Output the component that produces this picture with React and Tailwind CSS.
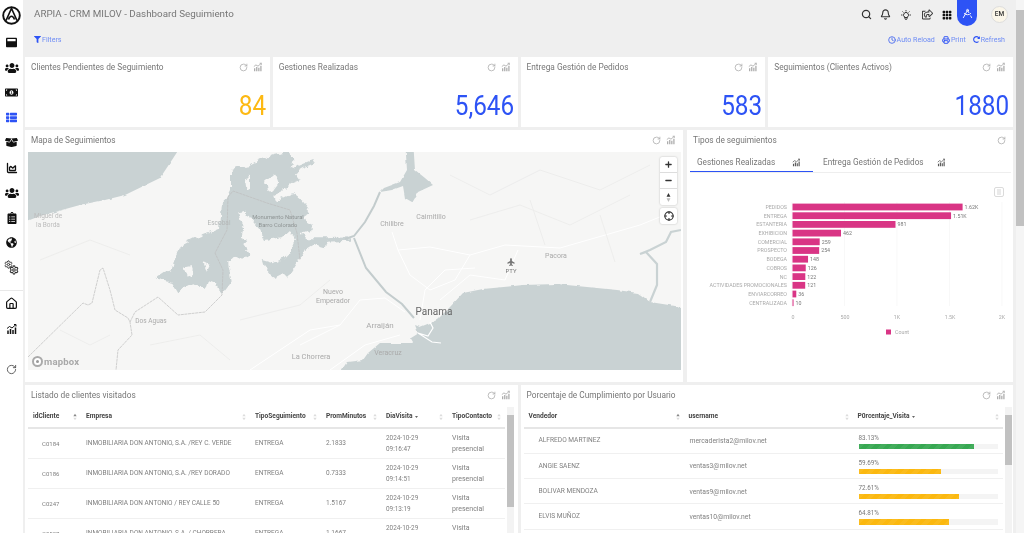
import {
  Bell,
  ChartArea,
  Clock,
  Crosshair,
  DraftingCompass,
  Home,
  Minus,
  Plus,
  Printer,
  RotateCw,
  Search,
  Settings,
} from "lucide-react";
import {
  FaBoxOpen,
  FaClipboardList,
  FaFilter,
  FaGlobeAmericas,
  FaMoneyBillAlt,
  FaPlane,
  FaRedoAlt,
  FaRegShareSquare,
  FaThList,
  FaUsers,
  FaWindowMaximize,
} from "react-icons/fa";
import { BsGrid3X3GapFill } from "react-icons/bs";
import { TbBulb } from "react-icons/tb";

const font = "font-['Roboto','Inter',sans-serif]";

const kpis = [
  { title: "Clientes Pendientes de Seguimiento", value: "84", color: "text-[#fdb913]" },
  { title: "Gestiones Realizadas", value: "5,646", color: "text-[#2d53f5]" },
  { title: "Entrega Gestión de Pedidos", value: "583", color: "text-[#2d53f5]" },
  { title: "Seguimientos (Clientes Activos)", value: "1880", color: "text-[#2d53f5]" },
];

const visits = [
  { id: "C0184", name: "INMOBILIARIA DON ANTONIO, S.A. /REY C. VERDE", mins: "2.1833", time: "09:16:47" },
  { id: "C0186", name: "INMOBILIARIA DON ANTONIO, S.A. /REY DORADO", mins: "0.7333", time: "09:14:51" },
  { id: "C0247", name: "INMOBILIARIA DON ANTONIO / REY CALLE 50", mins: "1.5167", time: "09:13:19" },
  { id: "C0527", name: "INMOBILIARIA DON ANTONIO, S.A. / CHORRERA", mins: "1.1667", time: "09:11:02" },
];

const users = [
  { name: "ALFREDO MARTINEZ", mail: "mercaderista2@milov.net", pct: 83.13, good: true },
  { name: "ANGIE SAENZ", mail: "ventas3@milov.net", pct: 59.69 },
  { name: "BOLIVAR MENDOZA", mail: "ventas9@milov.net", pct: 72.61 },
  { name: "ELVIS MUÑOZ", mail: "ventas10@milov.net", pct: 64.81 },
];

const bars = [
  ["PEDIDOS", 1620, "1.62K"],
  ["ENTREGA", 1510, "1.51K"],
  ["ESTANTERIA", 981, "981"],
  ["EXHIBICION", 462, "462"],
  ["COMERCIAL", 259, "259"],
  ["PROSPECTO", 254, "254"],
  ["BODEGA", 148, "148"],
  ["COBROS", 126, "126"],
  ["NC", 122, "122"],
  ["ACTIVIDADES PROMOCIONALES", 121, "121"],
  ["ENVIARCORREO", 36, "36"],
  ["CENTRALIZADA", 10, "10"],
];

const mapLabels = [
  ["Miguel de", 48, 218, 6.5, "#bcbcbc"],
  ["la Borda", 48, 227, 6.5, "#bcbcbc"],
  ["Escobal", 219, 225, 6.5, "#b4b8b8"],
  ["Monumento Natural", 278, 219, 5.8, "#8f9595"],
  ["Barro Colorado", 278, 227, 5.8, "#8f9595"],
  ["Dos Aguas", 151, 323, 6.5, "#aaa"],
  ["Nuevo", 333, 294, 7, "#aaa"],
  ["Emperador", 333, 303, 7, "#aaa"],
  ["La Chorrera", 311, 359, 7.5, "#aaa"],
  ["Chilibre", 392, 226, 7, "#aaa"],
  ["Caimitillo", 431, 219, 7, "#aaa"],
  ["Pacora", 556, 258, 7, "#aaa"],
  ["Panama", 434, 315, 10, "#666"],
  ["Arraiján", 380, 328, 8, "#aaa"],
  ["Veracruz", 388, 355, 7, "#aaa"],
  ["PTY", 511, 273, 6, "#777"],
];

// lake outline traced on a 3x crop taken at 150,150, as x y pairs
const lakeTrace =
  "300 45 330 30 370 15 420 5 430 30 425 60 440 50 490 30 495 40 460 55 435 70 450 90 425 100 400 125 370 140 375 155 430 130 450 145 475 175 470 195 455 205 490 225 480 240 450 250 470 265 525 265 600 262 600 272 530 275 525 295 490 285 465 300 450 330 440 345 415 385 400 370 370 385 340 345 335 330 370 340 400 325 420 305 435 270 420 240 395 262 345 270 330 240 300 205 290 185 265 190 280 240 275 260 295 270 280 285 300 315 275 330 255 320 235 340 245 395 215 435 200 400 175 390 165 420 130 400 100 415 85 430 65 395 15 385 45 365 65 360 75 320 95 285 135 265 175 250 210 235 215 170 240 120 240 60 265 50";

const lakeHoles = [
  "345 95 375 70 385 100 365 125 350 120",
  "100 350 125 345 130 375 110 380",
  "160 335 180 345 170 365",
  "285 85 300 80 300 115 288 110",
];

function tracePath(trace) {
  const n = trace.split(" ").map(Number);
  let d = "";
  for (let i = 0; i < n.length; i += 2) {
    d += `${i ? "L" : "M"}${(150 + n[i] / 3).toFixed(1)} ${(150 + n[i + 1] / 3).toFixed(1)}`;
  }
  return d + "Z";
}

// trend icon used on cards, tabs and the sidebar
function TrendIcon({ className }) {
  return (
    <svg viewBox="0 0 24 24" className={className} fill="none" stroke="currentColor" strokeWidth="2">
      <path d="M2 11l5-4 5 3 8-7M16 3h4v4" />
      <path d="M4 22v-7M9 22V12M14 22v-8M19 22V9" strokeWidth="3" />
    </svg>
  );
}

function Logo() {
  return (
    <svg viewBox="0 0 24 24" className="h-[19px] w-[19px]" fill="none" stroke="#111" strokeWidth="2.4">
      <circle cx="12" cy="12" r="10.5" />
      <path d="M5 18.5L12 3l7 15.5M8.2 17c1-2.6 2.3-4 3.8-4s2.8 1.4 3.8 4" strokeWidth="2" />
    </svg>
  );
}

function Gears() {
  return (
    <div className="relative h-[15px] w-[15px] text-[#333]">
      <Settings className="absolute left-0 top-0 h-[9px] w-[9px]" strokeWidth={2.6} />
      <Settings className="absolute bottom-0 right-0 h-[10px] w-[10px]" strokeWidth={2.6} />
    </div>
  );
}

function Sidebar() {
  const item = "flex h-[25px] w-full items-center justify-center text-[#111]";
  return (
    <aside className="flex h-full w-[23px] shrink-0 flex-col items-center bg-white">
      <div className="flex h-[30px] w-full items-center justify-center">
        <Logo />
      </div>
      <div className={item}><FaWindowMaximize className="h-[11px] w-[11px]" /></div>
      <div className={item}><FaUsers className="h-[14px] w-[14px]" /></div>
      <div className={item}><FaMoneyBillAlt className="h-[13px] w-[13px]" /></div>
      <div className={item}><FaThList className="h-[11px] w-[11px] text-[#2d53f5]" /></div>
      <div className={item}><FaBoxOpen className="h-[13px] w-[13px]" /></div>
      <div className={item}><ChartArea className="h-[12px] w-[12px]" strokeWidth={2.6} /></div>
      <div className={item}><FaUsers className="h-[14px] w-[14px]" /></div>
      <div className={item}><FaClipboardList className="h-[12px] w-[12px]" /></div>
      <div className={item}><FaGlobeAmericas className="h-[11px] w-[11px]" /></div>
      <div className={item}><Gears /></div>
      <div className="mt-[10px] h-px w-full bg-[#e8e8e8]" />
      <div className={item}><Home className="h-[13px] w-[13px]" strokeWidth={2.2} /></div>
      <div className={item}><TrendIcon className="h-[12px] w-[12px]" /></div>
      <div className={`${item} mt-[16px]`}><RotateCw className="h-[11px] w-[11px] text-[#555]" /></div>
    </aside>
  );
}

function TopBar() {
  return (
    <header className="flex h-[27px] items-center pl-[11px] pr-[8px] text-[#333]">
      <h1 className="flex-1 pt-[2px] text-[9.8px] text-[#777]">ARPIA - CRM MILOV - Dashboard Seguimiento</h1>
      <div className="flex h-full items-center">
        <Search className="mr-[8px] mt-[2px] h-[11px] w-[11px]" strokeWidth={2.6} />
        <Bell className="mr-[9.5px] mt-[2px] h-[11px] w-[11px]" strokeWidth={2.4} />
        <TbBulb className="mr-[9.5px] mt-[2px] h-[12px] w-[12px]" />
        <FaRegShareSquare className="mr-[9.5px] mt-[2px] h-[11px] w-[11px]" />
        <BsGrid3X3GapFill className="mr-[5px] mt-[2px] h-[10px] w-[10px] text-[#111]" />
        <div className="flex h-[26px] w-[20px] items-center justify-center self-start rounded-b-[10px] bg-[#2d53f5] text-white">
          <DraftingCompass className="h-[11px] w-[11px]" />
        </div>
        <div className="ml-[14px] mt-[2px] flex h-[17px] w-[17px] items-center justify-center rounded-full border border-[#ddd] bg-[#fbf6e9] text-[6.5px] font-medium text-[#333]">
          EM
        </div>
      </div>
    </header>
  );
}

function FilterBar() {
  const link = "flex items-center gap-[1px] text-[7.1px] text-[#6f8df5]";
  return (
    <div className="flex h-[30px] items-start justify-between pl-[11px] pr-[11px] pt-[7.5px]">
      <div className={link}>
        <FaFilter className="h-[7px] w-[7px] text-[#2d53f5]" />
        <span>Filters</span>
      </div>
      <div className="flex gap-[7px]">
        <div className={link}><Clock className="h-[8px] w-[8px] text-[#4a6cf0]" strokeWidth={2.6} /><span>Auto Reload</span></div>
        <div className={link}><Printer className="h-[8px] w-[8px] text-[#2d53f5]" strokeWidth={2.8} /><span>Print</span></div>
        <div className={link}><FaRedoAlt className="h-[7px] w-[7px] text-[#2d53f5]" /><span>Refresh</span></div>
      </div>
    </div>
  );
}

function CardHeader({ title, chart = true }) {
  return (
    <div className="flex h-[20px] shrink-0 items-center justify-between pl-[6px] pr-[7px] text-[#aaa]">
      <span className="truncate text-[8.3px] text-[#777]">{title}</span>
      <div className="flex items-center gap-[5px]">
        <RotateCw className="h-[9px] w-[9px]" />
        {chart && <TrendIcon className="h-[10px] w-[10px]" />}
      </div>
    </div>
  );
}

function KpiCard({ title, value, color }) {
  return (
    <div className="flex h-[70px] flex-col bg-white">
      <CardHeader title={title} />
      <div className={`mt-auto origin-right scale-x-90 pb-[7px] pr-[4px] text-right text-[27px] leading-[28px] ${color}`}>{value}</div>
    </div>
  );
}

function MapDrawing() {
  return (
    <svg viewBox="28 152 653 218" className="h-full w-full">
      <defs>
        <filter id="rough" filterUnits="userSpaceOnUse" x="100" y="130" width="300" height="200" colorInterpolationFilters="sRGB">
          <feTurbulence type="fractalNoise" baseFrequency="0.14" numOctaves="3" seed="4" />
          <feDisplacementMap in="SourceGraphic" scale="7" xChannelSelector="R" yChannelSelector="G" />
        </filter>
        <filter id="coast" x="-2%" y="-2%" width="104%" height="104%" colorInterpolationFilters="sRGB">
          <feTurbulence type="fractalNoise" baseFrequency="0.12" numOctaves="2" seed="7" />
          <feDisplacementMap in="SourceGraphic" scale="3" xChannelSelector="R" yChannelSelector="G" />
        </filter>
      </defs>
      <rect x="28" y="152" width="653" height="218" fill="#f6f6f5" />

      {/* Caribbean side */}
      <path d="M20 140H185L170 163 160 178 125 195 105 200 80 205 40 216 20 224Z" fill="#c9d2d3" filter="url(#coast)" />

      {/* Gatun lake */}
      <g filter="url(#rough)">
        <path d={tracePath(lakeTrace)} fill="#c9d2d3" />
        {lakeHoles.map((hole) => (
          <path key={hole} d={tracePath(hole)} fill="#f6f6f5" />
        ))}
      </g>

      {/* Alajuela lake and canal */}
      <path d="M405 140H413L415 170 425 178 433 185 418 192 412 202 405 198 403 186 392 190 380 192 384 188 400 182 407 170Z" fill="#c9d2d3" filter="url(#coast)" />
      <path d="M380 192L374 206 365 222 354 236 345 239M354 238L366 268 386 292 402 304 414 318" fill="none" stroke="#c3cccd" strokeWidth="2" />

      {/* Pacific side */}
      <path
        d="M695 309L650 302 638 293 617 290 557 284 523 285 483 289 463 293 450 307 437 320 430 323 420 327 415 325 418 333 410 338 413 343 380 343 368 353 363 360 347 362 335 380H695Z"
        fill="#c9d2d3"
        filter="url(#coast)"
      />
      <path d="M650 302L657 285 657 264 646 252 640 254 650 250 666 242 671 232 681 230" fill="none" stroke="#c9d2d3" strokeWidth="2.2" />
      <path d="M418 333L428 336 433 328 430 322M418 333L432 342 441 343" fill="none" stroke="#fff" strokeWidth="1.2" />

      {/* roads */}
      <g fill="none" stroke="#fff" strokeWidth="1">
        <path d="M392 232L398 250 430 247 470 255 505 245 560 248 640 225 672 212" />
        <path d="M398 250L410 275 430 290 455 280 470 255M440 300L470 275 505 280 518 250" />
        <path d="M420 320L425 290 445 270 475 268M405 312L385 298 360 300 340 325 300 345" />
        <path d="M250 370L310 330 340 325M330 370L365 345 400 335" />
      </g>
      {/* terrain */}
      <g fill="none" stroke="#ebebea" strokeWidth="0.8">
        <path d="M450 175L490 195 540 170 600 190 650 165M470 220L520 205 570 225 630 195M530 200L545 245M600 215L615 262" />
        <path d="M40 260L90 240 130 255M60 330L90 345 110 335M150 345L200 335 230 360M240 320L300 305 330 280" />
      </g>

      {/* frontiers */}
      <path
        d="M28 357L83 303 88 305 92 303 100 270 103 268 110 290 115 310 128 318 130 322 132 335 118 350 116 370M130 322L135 312 158 297 178 315 205 312 222 295 223 270 215 253 227 230 228 197 233 191 267 203 290 210 297 233 300 260"
        fill="none"
        stroke="#bdbdbd"
        strokeWidth="0.7"
        strokeDasharray="3 0.6"
      />

      {mapLabels.map(([text, x, y, size, fill]) => (
        <text key={text} x={x} y={y} fontSize={size} fill={fill} textAnchor="middle" fontFamily="Roboto, sans-serif">
          {text}
        </text>
      ))}
    </svg>
  );
}

function MapCard() {
  const btn = "flex h-[16px] w-[17px] items-center justify-center text-[#333]";
  return (
    <div className="flex h-[252px] flex-col bg-white">
      <div className="mb-[2px]"><CardHeader title="Mapa de Seguimientos" /></div>
      <div className="relative ml-[3px] mr-[2px] h-[218px] overflow-hidden">
        <MapDrawing />
        <FaPlane className="absolute left-[479px] top-[106px] h-[8px] w-[8px] -rotate-90 text-[#777]" />
        <div className="absolute right-[4px] top-[5px] flex flex-col gap-[3px]">
          <div className="flex flex-col divide-y divide-[#ddd] rounded-[2px] bg-white shadow-[0_0_2px_rgba(0,0,0,0.25)]">
            <div className={btn}><Plus className="h-[9px] w-[9px]" strokeWidth={3.5} /></div>
            <div className={btn}><Minus className="h-[9px] w-[9px]" strokeWidth={3.5} /></div>
            <div className={btn}>
              <svg viewBox="0 0 10 14" className="h-[9px] w-[7px]">
                <path d="M5 0L8 6H2Z" fill="#333" />
                <path d="M5 14L8 8H2Z" fill="#bbb" />
              </svg>
            </div>
          </div>
          <div className="rounded-[2px] bg-white shadow-[0_0_2px_rgba(0,0,0,0.25)]">
            <div className={btn}><Crosshair className="h-[10px] w-[10px]" strokeWidth={2.8} /></div>
          </div>
        </div>
        <div className="absolute bottom-[3px] left-[4px] flex items-center gap-[1px] text-[9.5px] font-bold leading-none tracking-[0.2px] text-[#a8a8a8]">
          <div className="flex h-[11px] w-[11px] items-center justify-center rounded-full border-[2px] border-[#aaa] bg-white">
            <div className="h-[3px] w-[3px] rounded-full bg-[#999]" />
          </div>
          <span>mapbox</span>
        </div>
      </div>
    </div>
  );
}

function BarChart() {
  const scale = 210 / 2000;
  return (
    <svg viewBox="687 173 326 209" className="h-[209px] w-full" fontFamily="Roboto, sans-serif">
      {[792, 844.5, 897, 949.5, 1002].map((x) => (
        <line key={x} x1={x} x2={x} y1="202" y2="306" stroke="#f3f3f3" strokeWidth="0.6" />
      ))}
      {bars.map(([label, value, text], i) => {
        const y = 207 + i * 8.7;
        const w = value * scale;
        return (
          <g key={label}>
            <text x="787" y={y + 1.9} fontSize="5.3" fill="#aaa" textAnchor="end">{label}</text>
            <rect x="792.5" y={y - 3.4} width={w} height="6.8" fill="#d93585" />
            <text x={792.5 + w + 2} y={y + 1.9} fontSize="5.3" fill="#777">{text}</text>
          </g>
        );
      })}
      {[["0", 793], ["500", 845], ["1K", 897], ["1.5K", 950], ["2K", 1002]].map(([t, x]) => (
        <text key={t} x={x} y="319" fontSize="5.3" fill="#aaa" textAnchor="middle">{t}</text>
      ))}
      <rect x="886" y="329.5" width="5" height="5" fill="#d93585" />
      <text x="895" y="334" fontSize="5.3" fill="#aaa">Count</text>
      <rect x="994.5" y="187.5" width="9" height="9" rx="1.5" fill="#fff" stroke="#ccc" strokeWidth="0.7" />
      <path d="M997 190h4M997 192h4M997 194h4" stroke="#bbb" strokeWidth="0.6" />
    </svg>
  );
}

function TiposCard() {
  return (
    <div className="flex h-[252px] flex-col overflow-hidden bg-white">
      <div className="mb-[2px]"><CardHeader title="Tipos de seguimientos" chart={false} /></div>
      <div className="ml-[3px] mr-[2px] flex h-[21px] shrink-0 border-b border-[#eee] text-[8.2px] text-[#777]">
        <div className="flex w-[123px] items-center border-b border-[#2d53f5] pl-[7px] pt-[1px]">
          <span className="flex-1">Gestiones Realizadas</span>
          <TrendIcon className="mr-[12px] h-[9px] w-[9px] text-[#555]" />
        </div>
        <div className="flex items-center pl-[10px] pt-[1px]">
          <span>Entrega Gestión de Pedidos</span>
          <TrendIcon className="ml-[13px] h-[9px] w-[9px] text-[#555]" />
        </div>
      </div>
      <BarChart />
    </div>
  );
}

function SortIcon({ active }) {
  return (
    <svg viewBox="0 0 6 12" className="h-[8px] w-[4px] shrink-0">
      <path d="M3 1L5.5 5H.5Z" fill={active ? "#888" : "#ddd"} />
      <path d="M3 11L5.5 7H.5Z" fill="#ddd" />
    </svg>
  );
}

function Th({ children, w, active, sorted }) {
  return (
    <th className={`${w} h-[21px] border-b-2 border-[#e6e6e6] pl-[5px] pr-[4px] text-left text-[6.6px] font-bold text-[#444]`}>
      <div className="flex items-center justify-between">
        <span className="flex items-center gap-[2px]">
          {children}
          {sorted && (
            <svg viewBox="0 0 6 4" className="h-[2px] w-[3px]">
              <path d="M0 0H6L3 4Z" fill="#666" />
            </svg>
          )}
        </span>
        <SortIcon active={active} />
      </div>
    </th>
  );
}

function ScrollTrack({ thumb }) {
  return (
    <div className="ml-[2px] flex h-full w-[7px] shrink-0 flex-col bg-[#f3f3f3] pt-[8px]">
      <div className={`${thumb} w-full bg-[#c1c1c1]`} />
    </div>
  );
}

function VisitTable() {
  const td = "border-b border-[#f0f0f0] pl-[5px] pt-[1px] text-[6.5px] text-[#808080]";
  return (
    <div className="flex h-[148px] flex-col overflow-hidden bg-white">
      <div className="mb-[2px]"><CardHeader title="Listado de clientes visitados" /></div>
      <div className="flex min-h-0 flex-1 pl-[3px] pr-[4px]">
        <table className="w-[477px] table-fixed border-collapse self-start">
          <thead>
            <tr>
              <Th w="w-[53px]" active>idCliente</Th>
              <Th w="w-[169px]">Empresa</Th>
              <Th w="w-[71px]">TipoSeguimiento</Th>
              <Th w="w-[60px]">PromMinutos</Th>
              <Th w="w-[66px]" sorted>DiaVisita</Th>
              <Th w="w-[58px]">TipoContacto</Th>
            </tr>
          </thead>
          <tbody>
            {visits.map((row) => (
              <tr key={row.id} className="h-[30px]">
                <td className={`${td} !pl-[14px] !text-[6px]`}>{row.id}</td>
                <td className={`${td} whitespace-nowrap`}>{row.name}</td>
                <td className={td}>ENTREGA</td>
                <td className={td}>{row.mins}</td>
                <td className={`${td} !text-[6.4px] leading-[10.5px]`}>2024-10-29<br />{row.time}</td>
                <td className={`${td} !text-[7px] leading-[10.5px]`}>Visita<br />presencial</td>
              </tr>
            ))}
          </tbody>
        </table>
        <ScrollTrack thumb="h-[92px]" />
      </div>
    </div>
  );
}

function UserTable() {
  const td = "border-b border-[#f0f0f0] pt-[1px] text-[#808080]";
  return (
    <div className="flex h-[148px] flex-col overflow-hidden bg-white">
      <div className="mb-[2px]"><CardHeader title="Porcentaje de Cumplimiento por Usuario" /></div>
      <div className="flex min-h-0 flex-1 pl-[3px] pr-[3px]">
        <table className="w-[479px] table-fixed border-collapse self-start">
          <thead>
            <tr>
              <Th w="w-[160px]" active>Vendedor</Th>
              <Th w="w-[169px]">username</Th>
              <Th w="w-[150px]" sorted>P0rcentaje_Visita</Th>
            </tr>
          </thead>
          <tbody>
            {users.map((row) => (
              <tr key={row.name} className="h-[25.3px]">
                <td className={`${td} pl-[15px] text-[6.6px]`}>{row.name}</td>
                <td className={`${td} pl-[6px] text-[6.8px]`}>{row.mail}</td>
                <td className={`${td} pl-[6px] pr-[5px]`}>
                  <div className="text-[6.3px] leading-[9px] text-[#777]">{row.pct.toFixed(2)}%</div>
                  <div className="mt-[1px] h-[5.5px] bg-[#f4f4f4]">
                    <div
                      className={`h-full ${row.good ? "bg-[#37a852]" : "bg-[#fbb80f]"} bg-[repeating-linear-gradient(135deg,rgba(255,255,255,0.06)_0_4px,transparent_4px_8px)]`}
                      style={{ width: `${row.pct}%` }}
                    />
                  </div>
                </td>
              </tr>
            ))}
          </tbody>
        </table>
        <ScrollTrack thumb="h-[50px]" />
      </div>
    </div>
  );
}

export default function App() {
  return (
    <div className={`${font} flex h-screen w-full overflow-hidden bg-[#efefef] blur-[0.35px]`}>
      <Sidebar />
      <main className="min-w-0 flex-1 overflow-hidden">
        <TopBar />
        <FilterBar />
        <div className="pl-[2px] pr-[3px]">
          <div className="grid grid-cols-4 gap-[3px]">
            {kpis.map((kpi) => (
              <KpiCard key={kpi.title} {...kpi} />
            ))}
          </div>
          <div className="mt-[3px] grid grid-cols-[658px_326px] gap-[4px]">
            <MapCard />
            <TiposCard />
          </div>
          <div className="mt-[3px] grid grid-cols-2 gap-[3px]">
            <VisitTable />
            <UserTable />
          </div>
        </div>
      </main>
      <div className="flex h-full w-[8px] shrink-0 flex-col bg-[#f5f5f5] pt-[10px]">
        <div className="h-[216px] w-full bg-[#c1c1c1]" />
      </div>
    </div>
  );
}
